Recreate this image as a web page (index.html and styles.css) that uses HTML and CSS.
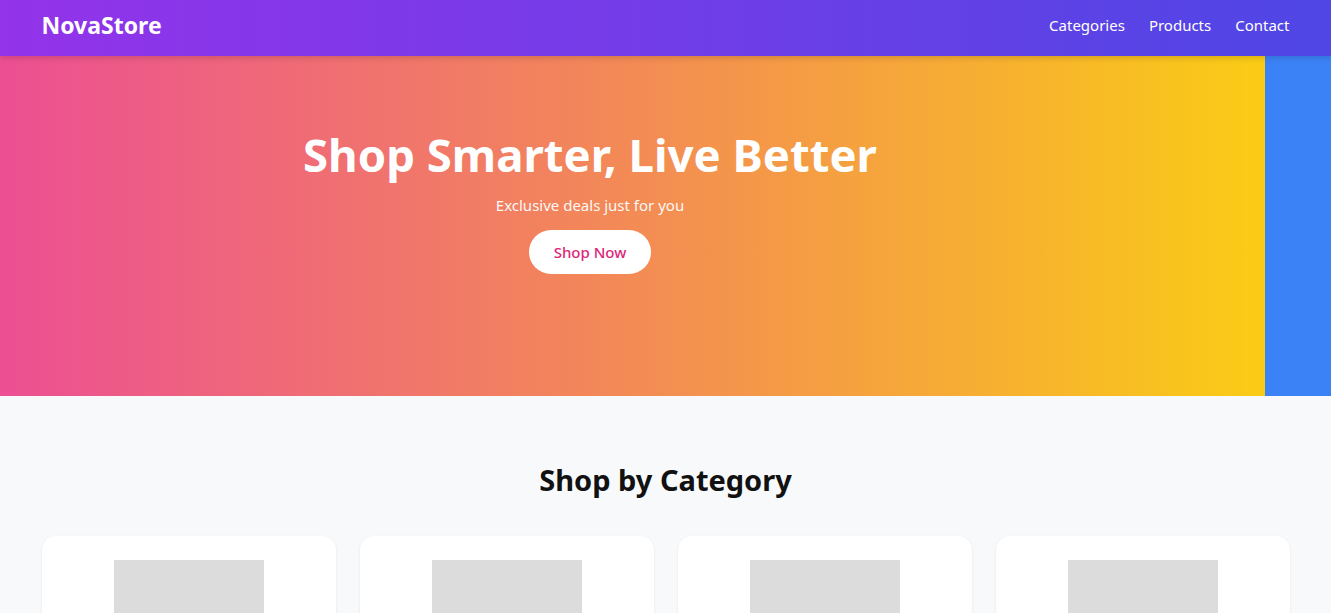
FILE: index.html
```html
<!DOCTYPE html>
<html lang="en">
<head>
<meta charset="utf-8">
<title>NovaStore</title>
<link rel="stylesheet" href="styles.css">
</head>
<body>
<header class="topbar">
  <div class="logo">NovaStore</div>
  <nav class="nav">
    <a href="#">Categories</a>
    <a href="#">Products</a>
    <a href="#">Contact</a>
  </nav>
</header>
<section class="hero">
  <div class="slides">
    <div class="slide slide-main">
      <div class="slide-content">
        <h1 class="hero-title">Shop Smarter, Live Better</h1>
        <p class="hero-sub">Exclusive deals just for you</p>
        <a class="hero-btn" href="#">Shop Now</a>
      </div>
    </div>
    <div class="slide slide-next"></div>
  </div>
</section>
<section class="categories">
  <h2 class="section-title">Shop by Category</h2>
  <div class="cat-grid">
    <div class="cat-card"><div class="cat-img"></div></div>
    <div class="cat-card"><div class="cat-img"></div></div>
    <div class="cat-card"><div class="cat-img"></div></div>
    <div class="cat-card"><div class="cat-img"></div></div>
  </div>
</section>
</body>
</html>
```
FILE: styles.css
```css
* { box-sizing: border-box; }
html, body { margin: 0; padding: 0; }
body {
  font-family: "Segoe UI", "Noto Sans", "Open Sans", sans-serif;
  background: #f8f9fb;
  color: #111;
  overflow-x: hidden;
}
.topbar {
  height: 56px;
  display: flex;
  align-items: center;
  justify-content: space-between;
  padding: 0 41.5px 7px;
  background: linear-gradient(to right, #9333ea, #4f46e5);
  color: #fff;
  position: relative;
  z-index: 2;
  box-shadow: 0 2px 6px rgba(0,0,0,0.15);
}
.logo {
  font-size: 23px;
  font-weight: 700;
}
.nav {
  display: flex;
  gap: 24px;
}
.nav a {
  color: #fff;
  text-decoration: none;
  font-size: 15px;
}
.hero {
  height: 340px;
  overflow: hidden;
}
.slides {
  display: flex;
  height: 100%;
}
.slide {
  flex: 0 0 auto;
  height: 100%;
}
.slide-main {
  width: 1265px;
  background: linear-gradient(to right, #ec4f93, #f38b55 50%, #facc15);
  padding-right: 85px;
}
.slide-next {
  width: 200px;
  background: #3b82f6;
}
.slide-content {
  display: flex;
  flex-direction: column;
  align-items: center;
  padding-top: 70px;
  color: #fff;
}
.hero-title {
  margin: 0;
  font-size: 45.5px;
  font-weight: 700;
  line-height: 1.25;
}
.hero-sub {
  margin: 12px 0 15px;
  font-size: 15px;
  opacity: 0.95;
}
.hero-btn {
  display: inline-block;
  background: #fff;
  color: #db2777;
  text-decoration: none;
  font-size: 15px;
  font-weight: 500;
  padding: 12px 25px;
  border-radius: 999px;
}
.categories {
  padding: 64px 41.5px 0;
}
.section-title {
  margin: 0 0 37px;
  text-align: center;
  font-size: 29px;
  font-weight: 700;
}
.cat-grid {
  display: grid;
  grid-template-columns: repeat(4, 1fr);
  gap: 24px;
}
.cat-card {
  background: #fff;
  border-radius: 14px;
  padding: 24px;
  height: 220px;
  display: flex;
  justify-content: center;
  box-shadow: 0 1px 3px rgba(0,0,0,0.08);
}
.cat-img {
  width: 150px;
  height: 120px;
  background: #dcdcdc;
}
```
